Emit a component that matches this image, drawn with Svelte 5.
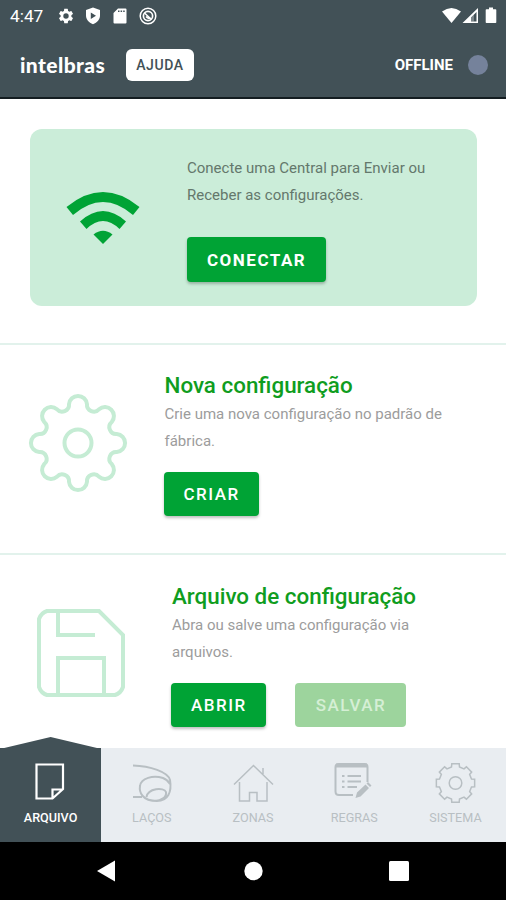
<script>
  let online = false;
  let activeTab = 'arquivo';

  const tabs = [
    { id: 'arquivo', label: 'ARQUIVO' },
    { id: 'lacos', label: 'LAÇOS' },
    { id: 'zonas', label: 'ZONAS' },
    { id: 'regras', label: 'REGRAS' },
    { id: 'sistema', label: 'SISTEMA' }
  ];

  function polar(radius, deg) {
    const a = (deg * Math.PI) / 180;
    return [radius * Math.sin(a), -radius * Math.cos(a)];
  }

  // eight round lobes joined by tangent arcs
  function roundGear(d, r, v) {
    const c = Math.cos(Math.PI / 8);
    const s = (d * d + v * v - 2 * d * c * v - r * r) / (2 * r + 2 * d * c - 2 * v);
    const valley = polar(v + s, 22.5);
    const t = r / (r + s);
    const x = valley[0] * t;
    const y = -d + (valley[1] + d) * t;
    const radius = Math.hypot(x, y);
    const half = (Math.atan2(x, -y) * 180) / Math.PI;
    let path = 'M' + polar(radius, -half).join(' ');
    for (let k = 0; k < 8; k++) {
      path += `A${r} ${r} 0 0 1 ${polar(radius, k * 45 + half).join(' ')}`;
      path += `A${s} ${s} 0 0 0 ${polar(radius, (k + 1) * 45 - half).join(' ')}`;
    }
    return path + 'Z';
  }

  function toothGear(inner, outer) {
    let path = '';
    for (let k = 0; k < 8; k++) {
      const a = k * 45;
      path += (k ? 'L' : 'M') + polar(inner, a - 14).join(' ');
      path += 'L' + polar(outer, a - 11).join(' ');
      path += 'L' + polar(outer, a + 11).join(' ');
      path += 'L' + polar(inner, a + 14).join(' ');
    }
    return path + 'Z';
  }

  function selectTab(id) {
    activeTab = id;
  }
</script>

<div class="screen">
  <header>
    <div class="status">
      <span class="time">4:47</span>
      <svg class="s-gear" width="18" height="18" viewBox="0 0 24 24"><path d="M19.14 12.94c.04-.3.06-.61.06-.94 0-.32-.02-.64-.07-.94l2.03-1.58a.49.49 0 0 0 .12-.61l-1.92-3.32a.49.49 0 0 0-.59-.22l-2.39.96a7 7 0 0 0-1.62-.94l-.36-2.54a.48.48 0 0 0-.48-.41h-3.84c-.24 0-.43.17-.47.41l-.36 2.54c-.59.24-1.13.57-1.62.94l-2.39-.96a.48.48 0 0 0-.59.22L2.74 8.87c-.12.21-.08.47.12.61l2.03 1.58c-.05.3-.09.63-.09.94s.02.64.07.94l-2.03 1.58a.49.49 0 0 0-.12.61l1.92 3.32c.12.22.37.29.59.22l2.39-.96c.5.38 1.03.7 1.62.94l.36 2.54c.05.24.24.41.48.41h3.84c.24 0 .44-.17.47-.41l.36-2.54a6.7 6.7 0 0 0 1.62-.94l2.39.96c.22.08.47 0 .59-.22l1.92-3.32a.49.49 0 0 0-.12-.61zM12 15.600A3.600 3.600 0 1 1 12 8.400a3.600 3.600 0 0 1 0 7.200z" /></svg>
      <svg class="s-shield" width="16" height="18" viewBox="0 0 16 18"><path fill-rule="evenodd" d="M8 .5 15 3v5.500c0 4-2.800 7.200-7 8.700-4.200-1.500-7-4.700-7-8.700V3zM5.800 5.500v6.500L11 8.700z" /></svg>
      <svg class="s-sd" width="14" height="16" viewBox="0 0 14 16"><path fill-rule="evenodd" d="M5 .5h7.500q1 0 1 1v13q0 1-1 1h-11q-1 0-1-1V5zM5 2.500v1.500h1.500v-1.500zm2.600 0v1.500h1.500v-1.500zm2.600 0v1.500h1.500v-1.500z" /></svg>
      <svg class="s-ring" width="18" height="18" viewBox="0 0 18 18"><g fill="none" stroke="#fff"><circle cx="9" cy="9" r="7.800" stroke-width="1.500" /><circle cx="9" cy="9" r="4.600" stroke-width="1.700" /><path d="m5.500 6 7 6.500M7 9.500q2.500 3 4.500 1" stroke-width="1.500" /></g></svg>
      <svg class="s-net" width="56" height="18" viewBox="0 0 56 18">
        <path d="M0 4.500Q9.500-2.500 19 4.500L9.500 16z" />
        <path fill-rule="evenodd" d="M20.500 16 36 1v15zM29 10.500v4h5.500V5z" />
        <path opacity=".3" d="M29 10.500v4h3v-7z" />
        <path d="M47 .5h4v1.700h2.500q.8 0 .8.800v12.200q0 .8-.8.800h-9q-.8 0-.8-.8V3q0-.8.800-.8H47z" />
      </svg>
    </div>
    <div class="bar">
      <span class="brand">intelbras</span>
      <button class="help">AJUDA</button>
      <span class="state">{online ? 'ONLINE' : 'OFFLINE'}</span>
      <span class="dot" class:online></span>
    </div>
  </header>

  <main>
    <section class="connect">
      <svg class="wifi" width="74" height="54" viewBox="0 0 74 54">
        <path d="M.5 16Q37-14 73.500 16L67 24Q37-2 7 24z" />
        <path d="M14 30.500Q37 9.500 60 30.500L53.500 38Q37 22 20.500 38z" />
        <path d="M27.500 43.500Q37 36 46.500 43.500L37 53z" />
      </svg>
      <div>
        <p>Conecte uma Central para Enviar ou<br />Receber as configurações.</p>
        <button class="btn">CONECTAR</button>
      </div>
    </section>

    <section class="row new">
      <svg class="art" width="102" height="102" viewBox="-51 -51 102 102">
        <path d={roundGear(39.5, 9, 34.5)} />
        <circle r="13.500" />
      </svg>
      <div>
        <h2>Nova configuração</h2>
        <p>Crie uma nova configuração no padrão de<br />fábrica.</p>
        <button class="btn">CRIAR</button>
      </div>
    </section>

    <section class="row file">
      <svg class="art" width="88" height="88" viewBox="0 0 88 88">
        <path d="M10 2H62L86 26V78Q84 84 78 86H10Q4 84 2 78V10Q4 4 10 2Z" />
        <path d="M21 2V26H58M21 86V49H67V86" />
      </svg>
      <div>
        <h2>Arquivo de configuração</h2>
        <p>Abra ou salve uma configuração via<br />arquivos.</p>
        <div class="actions">
          <button class="btn">ABRIR</button>
          <button class="btn" disabled>SALVAR</button>
        </div>
      </div>
    </section>
  </main>

  <nav>
    {#each tabs as tab}
      <button class="tab" class:active={activeTab === tab.id} on:click={() => selectTab(tab.id)}>
        <svg width="44" height="44" viewBox="0 0 44 44">
          {#if tab.id === 'arquivo'}
            <path stroke-width="2.2" d="M7.500 4.500H34V29L23.500 38.500H7.500ZM23.500 38V29.500H33.500" />
          {:else if tab.id === 'lacos'}
            <path stroke-width="2" d="M3 5.500C20 6 38 12 40 20C42 32 38 41 27 41C12 41 9 32 10 26C11 18 23 15 33 18Q38 20 40 24M3 37H12M16.500 37C18 28 34 27 36 32C37 37 31 41 25 41" />
          {:else if tab.id === 'zonas'}
            <path d="M3 24.500 22.500 5.500 42 24.500M8.500 22V41H18.500V32.500H26V41H36V22M32 14V8" />
          {:else if tab.id === 'regras'}
            <path stroke-width="2" d="M21 35H7Q3.500 35 3.500 31.500V7Q3.500 4 7 4H32.500Q35.500 4 35.500 7V22" />
            <path stroke-width="4" d="M4 5.500H35" />
            <path stroke-width="2" d="M10 16H12.500M15.500 16H29M10 21.500H12.500M15.500 21.500H29M10 27H12.500M15.500 27H25" />
            <path class="solid" d="M23.500 38 25 32.500 33.500 24.500 37 28 28.500 36.500ZM34.500 23.500 36 22 39.500 25.500 38 27Z" />
          {:else}
            <g transform="translate(22.5 23)">
              <path d={toothGear(16.5, 19.5)} />
              <circle r="6.300" />
            </g>
          {/if}
        </svg>
        <span>{tab.label}</span>
      </button>
    {/each}
  </nav>

  <footer>
    <svg width="20" height="22" viewBox="0 0 20 22"><path d="M0 11 18 .5v21z" /></svg>
    <svg width="20" height="20" viewBox="0 0 20 20"><circle cx="10.500" cy="10" r="9.200" /></svg>
    <svg width="20" height="20" viewBox="0 0 20 20"><rect width="20" height="20" rx="1.500" /></svg>
  </footer>
</div>

<style>
  :global(body) {
    margin: 0;
  }

  .screen {
    display: flex;
    flex-direction: column;
    width: 506px;
    height: 900px;
    overflow: hidden;
    background: #fff;
    font-family: Roboto, "Liberation Sans", sans-serif;
  }

  button {
    border: 0;
    padding: 0;
    font-family: inherit;
  }

  svg {
    display: block;
    flex: none;
  }

  header {
    box-sizing: border-box;
    height: 99px;
    flex: none;
    background: #425157;
    border-bottom: 2px solid #141d21;
    color: #fff;
  }

  .status {
    display: flex;
    align-items: center;
    height: 31px;
    padding: 0 8px 0 10px;
    fill: #fff;
  }

  .time {
    width: 47px;
    font-size: 17.3px;
  }

  .s-shield {
    margin-left: 10px;
  }

  .s-sd {
    margin-left: 12px;
  }

  .s-ring {
    margin-left: 12px;
  }

  .s-net {
    margin-left: auto;
  }

  .bar {
    display: flex;
    align-items: center;
    height: 67px;
    padding: 0 18px 0 20px;
  }

  .brand {
    width: 106px;
    font-family: Lato, sans-serif;
    font-size: 21px;
    font-weight: 900;
    line-height: 20px;
    letter-spacing: 0.4px;
  }

  .help {
    width: 68px;
    height: 32px;
    border-radius: 6px;
    background: #fff;
    color: #425157;
    font-size: 14px;
    font-weight: 500;
    letter-spacing: 0.6px;
  }

  .state {
    margin-left: auto;
    font-size: 15px;
    font-weight: 700;
  }

  .dot {
    width: 20px;
    height: 20px;
    margin-left: 15px;
    border-radius: 50%;
    background: #75829b;
  }

  .dot.online {
    background: #00a335;
  }

  main {
    flex: none;
    height: 649px;
  }

  .connect {
    box-sizing: border-box;
    display: flex;
    width: 447px;
    height: 177px;
    margin: 30px 0 37px 30px;
    padding: 26px 0 0 36px;
    border-radius: 12px;
    background: #cbedd9;
  }

  .wifi {
    margin: 36px 47px 0 0;
    fill: #00a335;
  }

  p {
    margin: 0;
    font-size: 15px;
    line-height: 27px;
    color: #9c9c9c;
  }

  .connect p {
    margin-bottom: 28px;
    color: #64786c;
  }

  .row {
    box-sizing: border-box;
    display: flex;
    height: 210px;
    border-top: 2px solid #e2f2ec;
  }

  .art {
    fill: none;
    stroke: #c5ecd4;
    stroke-width: 4;
  }

  .new .art {
    margin: 46.5px 37.5px 0 26.5px;
  }

  .new > div {
    margin-left: -1.5px;
  }

  .file .art {
    margin: 54px 47px 0 37px;
  }

  h2 {
    margin: 26px 0 0;
    font-size: 22.4px;
    font-weight: 500;
    line-height: 28px;
    color: #0f9d20;
  }

  .row p {
    margin: 2px 0 17px;
  }

  .file h2 {
    margin-top: 27px;
  }

  .btn {
    height: 45px;
    padding: 0 20px;
    border-radius: 4px;
    background: #00a335;
    box-shadow: 0 2px 3px rgba(0, 0, 0, 0.25);
    color: #fff;
    font-size: 17px;
    font-weight: 700;
    letter-spacing: 1.5px;
  }

  .row .btn {
    height: 44px;
    margin-left: -1px;
    padding-right: 19px;
    font-weight: 500;
  }

  .row .btn:disabled {
    margin-left: 0;
    padding: 0 20px 0 20.5px;
    background: #9dd49d;
    box-shadow: none;
    color: #d5efd5;
  }

  .actions {
    display: flex;
    gap: 29.5px;
  }

  nav {
    display: flex;
    flex: none;
    height: 94px;
    background: #e9edf1;
  }

  .tab {
    position: relative;
    display: flex;
    flex: 1;
    flex-direction: column;
    align-items: center;
    padding-top: 12px;
    background: none;
    color: #b8bfc3;
    font-size: 12.6px;
  }

  .tab svg {
    fill: none;
    stroke: currentColor;
    stroke-width: 1.5;
  }

  .tab .solid {
    fill: currentColor;
    stroke: none;
  }

  .tab span {
    margin-top: 7px;
    line-height: 14px;
  }

  .tab.active {
    background: #425157;
    color: #fff;
    font-weight: 500;
  }

  .tab.active::before {
    content: '';
    position: absolute;
    top: -11px;
    left: 0;
    width: 100%;
    height: 12px;
    background: #425157;
    clip-path: polygon(0 100%, 50% 0, 100% 100%);
  }

  footer {
    display: flex;
    flex: none;
    align-items: center;
    justify-content: space-between;
    height: 58px;
    padding: 0 97px;
    background: #000;
    fill: #fff;
  }
</style>
